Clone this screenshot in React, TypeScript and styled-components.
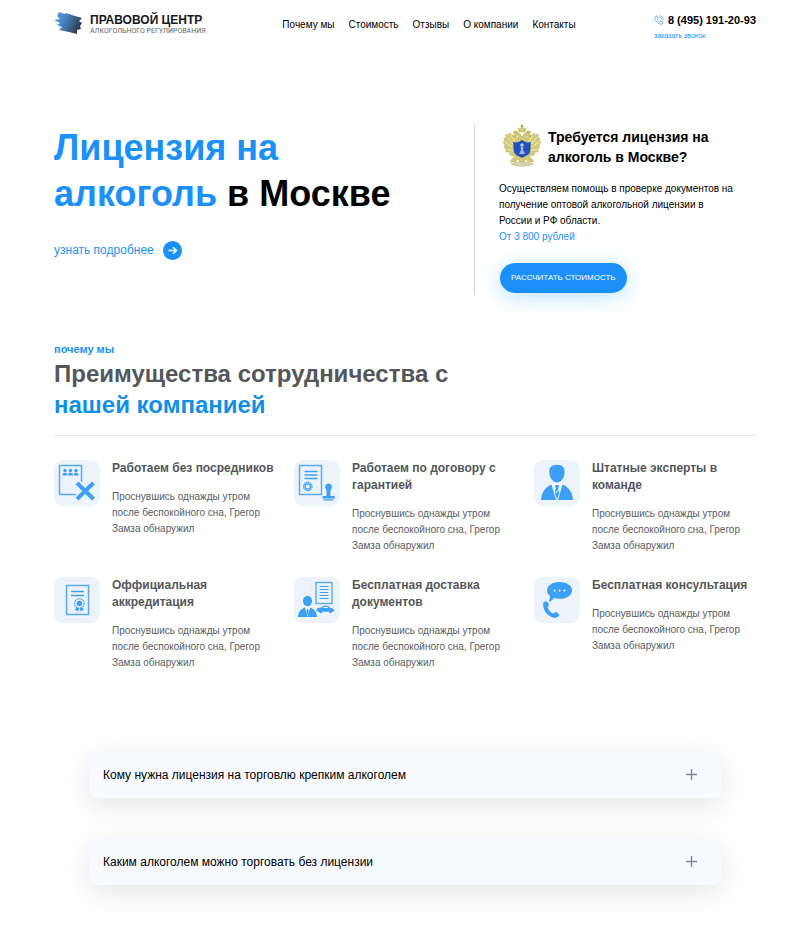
import React from "react";
import styled, { createGlobalStyle } from "styled-components";

const BLUE = "#1a90f8";
const ICON_BLUE = "#3d9ff5";

const GlobalStyle = createGlobalStyle`
  *, *::before, *::after { box-sizing: border-box; }
  body {
    margin: 0;
    background: #fff;
    color: #000;
    font-family: "Liberation Sans", Arial, sans-serif;
  }
  h1, h2, h3, p, ul { margin: 0; padding: 0; }
  a { color: inherit; text-decoration: none; }
`;

const Page = styled.div`
  padding: 0 54px 40px;
`;

const Header = styled.header`
  display: flex;
  justify-content: space-between;
  align-items: flex-start;
  padding-top: 10px;
`;

const Logo = styled.a`
  display: flex;
  align-items: center;
  gap: 7px;
  width: 150px;

  svg { flex: none; }
`;

const LogoText = styled.span`
  display: flex;
  flex-direction: column;
  padding-top: 2px;
  white-space: nowrap;
`;

const LogoTitle = styled.span`
  font: 700 12px/14px "Liberation Sans", Arial, sans-serif;
  color: #16181c;
`;

const LogoSub = styled.span`
  font: 400 7px/8px Roboto, "Liberation Sans", sans-serif;
  color: #5d5f63;
`;

const Nav = styled.nav`
  display: flex;
  gap: 14px;
  padding-top: 7px;
  font-size: 10px;
  line-height: 16px;
  white-space: nowrap;
`;

const Contact = styled.div`
  display: flex;
  flex-direction: column;
`;

const Phone = styled.a`
  display: flex;
  align-items: center;
  gap: 4px;
  font-size: 11px;
  line-height: 20px;
  font-weight: 700;
  white-space: nowrap;
`;

const Callback = styled.a`
  font-size: 7px;
  line-height: 12px;
  color: ${BLUE};
`;

const Hero = styled.section`
  display: grid;
  grid-template-columns: 1fr 282px;
  margin-top: 82px;
`;

const HeroTitle = styled.h1`
  padding-top: 1px;
  font-size: 36px;
  line-height: 46px;
  font-weight: 700;
`;

const Accent = styled.span`
  color: ${BLUE};
`;

const More = styled.a`
  display: inline-flex;
  align-items: center;
  gap: 9px;
  margin-top: 23px;
  font-size: 12px;
  line-height: 20px;
  color: ${BLUE};
`;

const Offer = styled.div`
  border-left: 1px solid #d4d6d8;
  padding-left: 24px;
`;

const OfferHead = styled.div`
  display: flex;
  gap: 6px;
  padding-left: 3px;

  svg { flex: none; }
`;

const OfferTitle = styled.h2`
  padding-top: 3px;
  font-size: 14px;
  line-height: 20px;
`;

const OfferText = styled.p`
  margin-top: 13px;
  font-size: 10px;
  line-height: 16px;
`;

const OfferButton = styled.button`
  display: block;
  margin: 18px 0 1px 1px;
  height: 30px;
  padding: 0 11px;
  border: 0;
  border-radius: 15px;
  background: ${BLUE};
  color: #fff;
  font: 400 8px/10px "Liberation Sans", Arial, sans-serif;
  white-space: nowrap;
  box-shadow: 0 4px 20px rgba(26, 160, 248, 0.3);
`;

const SectionHead = styled.div`
  margin-top: 47px;
  padding-bottom: 15px;
  border-bottom: 1px solid #e3e4e5;
`;

const Eyebrow = styled.p`
  font-size: 11px;
  line-height: 16px;
  font-weight: 700;
  color: ${BLUE};
`;

const SectionTitle = styled.h2`
  padding-top: 1px;
  font-size: 24px;
  line-height: 31px;
  color: #53575b;
`;

const TitleAccent = styled.span`
  color: #0f90e8;
`;

const Benefits = styled.div`
  display: grid;
  grid-template-columns: repeat(3, 1fr);
  gap: 23px 18px;
  margin-top: 24px;
`;

const Benefit = styled.article`
  display: flex;
  gap: 12px;
`;

const Tile = styled.svg`
  flex: none;
  width: 46px;
  height: 46px;
  border-radius: 9px;
  background: #edf3fb;
`;

const BenefitTitle = styled.h3`
  font-size: 12px;
  line-height: 17px;
  color: #53575b;
`;

const BenefitText = styled.p`
  margin-top: 12px;
  font-size: 10px;
  line-height: 16px;
  color: #595d61;
`;

const Faq = styled.section`
  display: flex;
  flex-direction: column;
  gap: 40px;
  margin: 80px 35px 0;
`;

const Question = styled.button`
  display: flex;
  align-items: center;
  justify-content: space-between;
  flex: none;
  height: 47px;
  padding: 0 24px 0 14px;
  border: 0;
  border-radius: 8px;
  background: #f7fbff;
  color: #000;
  text-align: left;
  font: 400 12px/18px "Liberation Sans", Arial, sans-serif;
  box-shadow: 0 8px 28px rgba(0, 0, 0, 0.1);
`;

const LogoMark = () => (
  <svg width="29" height="26" viewBox="0 0 29 26" aria-hidden="true">
    <defs>
      <linearGradient id="mark" x1="0" y1="0" x2="1" y2="0.4">
        <stop offset="0" stopColor="#5aa6ec" />
        <stop offset="0.5" stopColor="#447dbd" />
        <stop offset="1" stopColor="#333d4e" />
      </linearGradient>
    </defs>
    <path
      d="M5 2 L11 4 L12 3 L21 6 L28 8 L25 11 L28 13 L26 16 L27 19 L23 20 L23 24 L15 22 L5 20 L8 17 L3 15 L6 13 L0 10 L6 9 L3 6 Z"
      fill="url(#mark)"
    />
  </svg>
);

const PhoneIcon = () => (
  <svg width="10" height="10" viewBox="0 0 20 20" fill="none" stroke="#5ba9ee" strokeWidth="1.6" aria-hidden="true">
    <path d="M5 1.5 L1.5 4 C1 11 8 19 15.5 18.5 L18.5 15 L14 11.5 L11.5 13.5 C9 12.5 7 10.5 6.5 8 L8.5 6 Z" />
    <path d="M10.5 1.5 C15 1.5 18.5 5 18.5 9.5 M10.5 4.5 C13.5 4.5 15.5 6.5 15.5 9.5" />
  </svg>
);

const ArrowIcon = () => (
  <svg width="19" height="19" viewBox="0 0 19 19" aria-hidden="true">
    <circle cx="9.5" cy="9.5" r="9.5" fill={BLUE} />
    <path d="M5.5 9.5 H13.5 M10 6.3 L13.5 9.5 L10 12.7" fill="none" stroke="#fff" strokeWidth="1.5" />
  </svg>
);

const Emblem = () => (
  <svg width="40" height="44" viewBox="0 0 40 44" aria-hidden="true">
    <g fill="#d3cb78" stroke="#a8a04e" strokeWidth="0.4">
      <path d="M17 14 C13 13 11 11 7 9 L8 12 L4 10 L4 14 L2 14 L3 17 L1 18 L3 21 L2 23 L4 25 L4 28 L7 28 L8 31 L12 32 L18 30 Z" />
      <path d="M23 14 C27 13 29 11 33 9 L32 12 L36 10 L36 14 L38 14 L37 17 L39 18 L37 21 L38 23 L36 25 L36 28 L33 28 L32 31 L28 32 L22 30 Z" />
      <path d="M18 18 C18 14 17 12 15 12 L11 13 L13 9 C16 7 19 10 20 14 C21 10 24 7 27 9 L29 13 L25 12 C23 12 22 14 22 18 Z" />
      <path d="M14 31 L10 35 L8 38 L13 38 L17 35 L18 40 L20 42 L22 40 L23 35 L27 38 L32 38 L30 35 L26 31 Z" />
      <path d="M17 8 L16 4 L18 5 L20 2 L22 5 L24 4 L23 8 Z M11 9 L12 7 L15 7 L15 9 Z M25 9 L25 7 L28 7 L29 9 Z" />
      <path d="M9 40 C15 37 25 37 31 40 C26 43 14 43 9 40 Z" fill="#d5d3b6" />
    </g>
    <path
      d="M5 13 L11 20 M3 18 L10 23 M5 26 L11 26 M35 13 L29 20 M37 18 L30 23 M35 26 L29 26 M9 11 L13 18 M31 11 L27 18"
      stroke="#f3efc8"
      strokeWidth="0.9"
    />
    <path d="M11 18 C15 19 17 18 20 16 C23 18 25 19 29 18 C28 21 29 24 28 28 C27 31 23 32 20 34 C17 32 13 31 12 28 C11 24 12 21 11 18 Z" fill="#2450bc" />
    <circle cx="20" cy="21" r="1.8" fill="#b9cbee" />
    <path d="M18.5 23 H21.5 L21 26 L23 30 H17 L19 26 Z" fill="#9db5e6" />
    <circle cx="20" cy="2" r="1.2" fill="#a89d3b" />
  </svg>
);

const PlusIcon = () => (
  <svg width="11" height="11" viewBox="0 0 11 11" stroke="#828589" strokeWidth="1.4" aria-hidden="true">
    <path d="M5.5 0 V11 M0 5.5 H11" />
  </svg>
);

const Person = ({ x }: { x: number }) => (
  <g fill={ICON_BLUE}>
    <circle cx={x} cy="10.5" r="1.7" />
    <path d={`M${x - 2.4} 15.5 V14.5 C${x - 2.4} 12.3 ${x + 2.4} 12.3 ${x + 2.4} 14.5 V15.5 Z`} />
  </g>
);

const NoMiddlemen = () => (
  <>
    <path d="M22 34.5 H5.5 V5.5 H27.5 V22" fill="none" stroke="#5aaaf2" strokeWidth="1.5" />
    <Person x={11} />
    <Person x={16.5} />
    <Person x={22} />
    <path d="M23 23 L39.5 39 M39.5 23 L23 39" stroke={ICON_BLUE} strokeWidth="4" />
  </>
);

const Contract = () => (
  <>
    <rect x="5.5" y="5.5" width="22" height="29" fill="none" stroke="#5aaaf2" strokeWidth="1.5" />
    <path d="M10.5 11.5 H23.5 M10.5 15 H23.5 M10.5 18.5 H23.5" stroke={ICON_BLUE} strokeWidth="1.3" />
    <circle cx="13.8" cy="26.5" r="4.2" fill="none" stroke={ICON_BLUE} strokeWidth="1.3" strokeDasharray="1.6 0.5" />
    <circle cx="13.8" cy="26.5" r="2.6" fill="none" stroke={ICON_BLUE} strokeWidth="1.2" />
    <path
      d="M34.5 23.5 A3.4 3.4 0 0 1 37.2 29 C36.2 30.5 36.3 33 36.6 36 H40.7 V38.5 H28.5 V36 H32.4 C32.7 33 32.8 30.5 31.8 29 A3.4 3.4 0 0 1 34.5 23.5 Z M29.5 39.3 H39.7 V40.5 H29.5 Z"
      fill={ICON_BLUE}
    />
  </>
);

const Expert = () => (
  <>
    <g fill={ICON_BLUE}>
      <path d="M23 4.7 C28 4.7 31 7.5 30.7 12 C30.5 18 27 22.5 23 22.5 C19 22.5 15.5 18 15.3 12 C15 7.5 18 4.7 23 4.7 Z" />
      <path d="M17.5 24.5 L22 40 H7 C7.5 33 10.5 27.5 17.5 24.5 Z" />
      <path d="M28.5 24.5 L24 40 H39 C38.5 33 35.5 27.5 28.5 24.5 Z" />
    </g>
    <path d="M18 24 H28 L23 40 Z" fill="#fff" />
    <path d="M20.7 25 H25.3 L24.4 28 L25.3 33 L23 39.5 L20.7 33 L21.6 28 Z" fill={ICON_BLUE} />
    <path d="M21.3 33.5 L24.7 29.5" stroke="#fff" strokeWidth="1" />
  </>
);

const Accreditation = () => (
  <>
    <rect x="12.5" y="8.5" width="22" height="29" fill="none" stroke="#5aaaf2" strokeWidth="1.5" />
    <path d="M17 14.5 H30 M17 18.5 H30" stroke={ICON_BLUE} strokeWidth="1.3" />
    <circle cx="25.4" cy="26.5" r="4.7" fill="none" stroke={ICON_BLUE} strokeWidth="1.1" strokeDasharray="1.8 0.5" />
    <circle cx="25.4" cy="26.5" r="2.8" fill={ICON_BLUE} />
    <path
      d="M22.5 30.5 L20.5 33.5 L22.8 33.3 L24 35 L25 31.5 Z M28.3 30.5 L30.3 33.5 L28 33.3 L26.8 35 L25.8 31.5 Z"
      fill={ICON_BLUE}
    />
  </>
);

const Delivery = () => (
  <>
    <rect x="22" y="5.5" width="16" height="21" fill="none" stroke="#5aaaf2" strokeWidth="1.4" />
    <path
      d="M25.5 9.5 H34.5 M25.5 12.5 H34.5 M25.5 15.5 H34.5 M25.5 18.5 H34.5 M25.5 21.5 H34.5"
      stroke={ICON_BLUE}
    />
    <g fill={ICON_BLUE}>
      <ellipse cx="13.5" cy="24" rx="4.5" ry="5.2" />
      <path d="M4 40 C4.3 35 6.5 32 11 30.5 L13.5 40 Z M23 40 C22.7 35 20.5 32 16 30.5 L13.5 40 Z" />
      <path d="M22.5 34 C22 31 24 30.5 26.5 30.7 L29.5 28.8 C32 28 34.5 28.7 36.5 31 C39 31.3 40.5 32 40 34.5 H38.5 A1.8 1.8 0 0 1 35 34.8 H28.5 A1.8 1.8 0 0 1 25 34.8 Z" />
    </g>
    <path d="M11.3 31 L13.5 38 L15.7 31 Z" fill="#fff" />
    <path d="M12.8 32 H14.2 L14.7 36 L13.5 38 L12.3 36 Z" fill={ICON_BLUE} />
    <path d="M28.5 31 L30.5 29.7 H33 L34.5 31 Z" fill="#edf3fb" />
  </>
);

const Consultation = () => (
  <>
    <path
      d="M25.5 5 C32.5 5 38 8.5 38 13.5 C38 18.5 32.5 21.8 25.5 21.8 C23.5 21.8 21.5 21.5 20 21 C18.5 23 17 24.3 14.5 25 C15.5 23 15.8 21.5 16 19 C14 17.5 13 15.5 13 13.5 C13 8.5 18.5 5 25.5 5 Z"
      fill={ICON_BLUE}
    />
    <g fill="#fff">
      <circle cx="20.5" cy="13.5" r="1" />
      <circle cx="25.5" cy="13.5" r="1" />
      <circle cx="30.5" cy="13.5" r="1" />
    </g>
    <path
      d="M11.5 24.2 L9.5 25.5 C7.5 32 14 40.5 21.5 41 L25 39 C25.5 38 25 37 24 36.2 L21.5 35 L19 36.5 C16.5 35.5 14.5 33 13.5 30.2 L15 28 C14.8 26.5 13.5 24.5 11.5 24.2 Z"
      fill={ICON_BLUE}
    />
  </>
);

const benefits = [
  { title: "Работаем без посредников", Icon: NoMiddlemen },
  { title: "Работаем по договору с гарантией", Icon: Contract },
  { title: "Штатные эксперты в команде", Icon: Expert },
  { title: "Оффициальная аккредитация", Icon: Accreditation },
  { title: "Бесплатная доставка документов", Icon: Delivery },
  { title: "Бесплатная консультация", Icon: Consultation },
];

const links = ["Почему мы", "Стоимость", "Отзывы", "О компании", "Контакты"];

const questions = [
  "Кому нужна лицензия на торговлю крепким алкоголем",
  "Каким алкоголем можно торговать без лицензии",
];

export default function App() {
  return (
    <Page>
      <GlobalStyle />
      <Header>
        <Logo href="#">
          <LogoMark />
          <LogoText>
            <LogoTitle>ПРАВОВОЙ ЦЕНТР</LogoTitle>
            <LogoSub>АЛКОГОЛЬНОГО РЕГУЛИРОВАНИЯ</LogoSub>
          </LogoText>
        </Logo>
        <Nav>
          {links.map((label) => (
            <a href="#" key={label}>{label}</a>
          ))}
        </Nav>
        <Contact>
          <Phone href="tel:+74951912093">
            <PhoneIcon />8 (495) 191-20-93
          </Phone>
          <Callback href="#">заказать звонок</Callback>
        </Contact>
      </Header>

      <Hero>
        <div>
          <HeroTitle>
            <Accent>Лицензия на<br />алкоголь</Accent> в Москве
          </HeroTitle>
          <More href="#">узнать подробнее<ArrowIcon /></More>
        </div>
        <Offer>
          <OfferHead>
            <Emblem />
            <OfferTitle>Требуется лицензия на<br />алкоголь в Москве?</OfferTitle>
          </OfferHead>
          <OfferText>
            Осуществляем помощь в проверке документов на
            <br />
            получение оптовой алкогольной лицензии в
            <br />
            России и РФ области.
            <br />
            <Accent>От 3 800 рублей</Accent>
          </OfferText>
          <OfferButton type="button">РАССЧИТАТЬ СТОИМОСТЬ</OfferButton>
        </Offer>
      </Hero>

      <SectionHead>
        <Eyebrow>почему мы</Eyebrow>
        <SectionTitle>
          Преимущества сотрудничества с<br />
          <TitleAccent>нашей компанией</TitleAccent>
        </SectionTitle>
      </SectionHead>

      <Benefits>
        {benefits.map(({ title, Icon }) => (
          <Benefit key={title}>
            <Tile viewBox="0 0 46 46" aria-hidden="true"><Icon /></Tile>
            <div>
              <BenefitTitle>{title}</BenefitTitle>
              <BenefitText>Проснувшись однажды утром после беспокойного сна, Грегор Замза обнаружил</BenefitText>
            </div>
          </Benefit>
        ))}
      </Benefits>

      <Faq>
        {questions.map((text) => (
          <Question type="button" key={text}>
            {text}
            <PlusIcon />
          </Question>
        ))}
      </Faq>
    </Page>
  );
}
